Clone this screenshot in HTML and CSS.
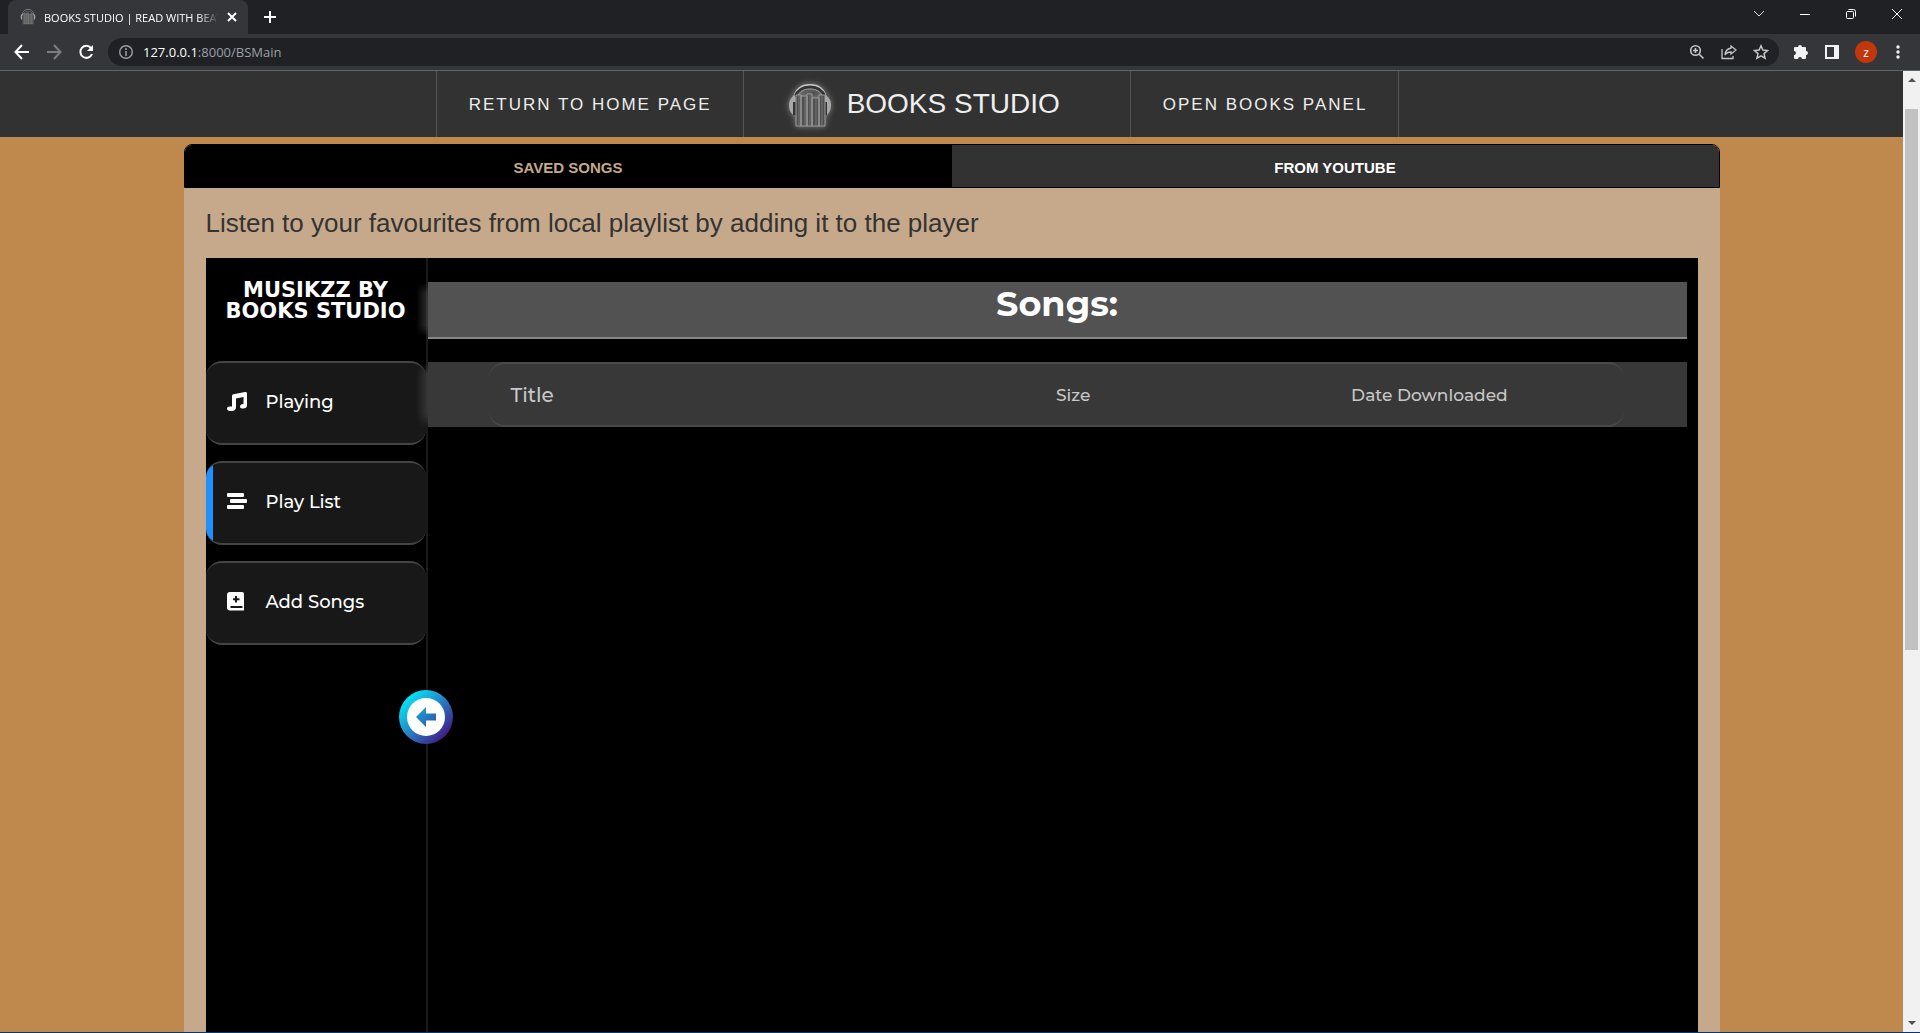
FILE: index.html
```html
<!DOCTYPE html>
<html lang="en">
<head>
<meta charset="utf-8">
<title>BOOKS STUDIO | READ WITH BEATS</title>
<link rel="stylesheet" href="styles.css">
</head>
<body>
<svg class="defs" aria-hidden="true">
  <defs>
    <linearGradient id="cool" x1="0" y1="0" x2="20" y2="20" gradientUnits="userSpaceOnUse"><stop offset="0" stop-color="#1ba9d6"/><stop offset="1" stop-color="#2f50ac"/></linearGradient>
    <symbol id="books" viewBox="0 0 44 46">
      <path d="M6 15C8 5 14 2 22 2s14 3 16 13" fill="none" stroke="#c4c4c4" stroke-width="2"/>
      <path d="M7 14C10 6 15 4 22 4s12 2 15 10" fill="none" stroke="#333" stroke-width="3"/>
      <path d="M9 14C12 8 16 6 22 6s10 2 13 8" fill="none" stroke="#999"/>
      <path d="M7 12C3 14 1 18 1 22s1 7 4 10l2-1V13zM37 12c4 2 6 6 6 10s-1 7-4 10l-2-1V13z" fill="#a8a8a8"/>
      <path d="M5 19h3v13H5zM36 19h3v13h-3z" fill="#333"/>
      <path d="M8 12h5v31H8zM13 13h6v30h-6zM19 11h5v32h-5zM24 15h7v28h-7zM31 12h6v31h-6z" fill="#505050" stroke="#9c9c9c"/>
      <path d="M11 13v29M17 14v28M22 12v30M28 16v26M34 13v29" stroke="#747474"/>
    </symbol>
  </defs>
</svg>
<div class="window">
  <header class="chrome">
    <div class="tabstrip">
      <div class="tab">
        <svg class="favicon"><use href="#books"/></svg>
        <span class="tab-title">BOOKS STUDIO | READ WITH BEATS</span>
        <button class="plain" aria-label="Close tab"><svg width="10" height="10" viewBox="0 0 10 10"><path d="M1 1l8 8M9 1L1 9" stroke="#fff" stroke-width="2"/></svg></button>
      </div>
      <button class="plain new-tab" aria-label="New tab"><svg width="12" height="12" viewBox="0 0 12 12"><path d="M6 0v12M0 6h12" stroke="#fff" stroke-width="2"/></svg></button>
      <div class="window-buttons">
        <button class="plain" aria-label="Search tabs"><svg width="12" height="12" viewBox="0 0 12 12"><path d="M1 3l5 5 5-5" fill="none" stroke="#ddd"/></svg></button>
        <button class="plain" aria-label="Minimize"><svg width="12" height="12" viewBox="0 0 12 12"><path d="M1 6.500h10" stroke="#fff"/></svg></button>
        <button class="plain" aria-label="Restore"><svg width="12" height="12" viewBox="0 0 12 12" fill="none" stroke="#fff"><rect x="1.500" y="3.500" width="7" height="7" rx="1"/><path d="M3.500 1.500h5a2 2 0 0 1 2 2v5"/></svg></button>
        <button class="plain" aria-label="Close"><svg width="12" height="12" viewBox="0 0 12 12"><path d="M1 1l10 10M11 1L1 11" stroke="#fff"/></svg></button>
      </div>
    </div>
    <div class="toolbar">
      <div class="history">
        <button class="plain" aria-label="Back"><svg width="16" height="16" viewBox="0 0 16 16" fill="none" stroke="#fff" stroke-width="2"><path d="M15 8H2M8 1L1.500 8 8 15"/></svg></button>
        <button class="plain" aria-label="Forward"><svg width="16" height="16" viewBox="0 0 16 16" fill="none" stroke="#7c7d80" stroke-width="2"><path d="M1 8h13M8 1l6.500 7L8 15"/></svg></button>
        <button class="plain" aria-label="Reload"><svg width="16" height="16" viewBox="0 0 16 16"><path d="M13 4A6 6 0 1 0 14 10" fill="none" stroke="#fff" stroke-width="2"/><path d="M15 1v6H9z" fill="#fff"/></svg></button>
      </div>
      <div class="omnibox">
        <svg width="14" height="14" viewBox="0 0 14 14" fill="none" stroke="#9aa0a6"><circle cx="7" cy="7" r="6.300" stroke-width="1.400"/><path d="M7 6v5M7 3v2" stroke-width="1.500"/></svg>
        <a class="url" href="#"><b>127.0.0.1</b>:8000/BSMain</a>
        <div class="page-actions">
          <button class="plain" aria-label="Zoom"><svg width="16" height="16" viewBox="0 0 16 16" fill="none" stroke="#c4c7c5" stroke-width="1.600"><circle cx="6.500" cy="6.500" r="4.800"/><path d="M10 10l4.500 4.500M4 6.500h5M6.500 4v5"/></svg></button>
          <button class="plain" aria-label="Share"><svg width="16" height="16" viewBox="0 0 16 16" fill="none" stroke="#c4c7c5" stroke-width="1.300"><path d="M1 5v9.500h11V12M10 2l5 4-5 4V8C7 8 5 9 4 11c0-4 2-6 6-7z"/></svg></button>
          <button class="plain" aria-label="Bookmark"><svg width="16" height="16" viewBox="0 0 16 16" fill="none" stroke="#c4c7c5" stroke-width="1.500"><path d="M8 1.800l1.900 4.300 4.600.400-3.500 3.100 1.100 4.600L8 11.800l-4.100 2.400L5 9.600 1.500 6.500l4.600-.4z"/></svg></button>
        </div>
      </div>
      <div class="extensions">
        <button class="plain" aria-label="Extensions"><svg width="16" height="16" viewBox="0 0 16 16"><path d="M1 4q0-1 1-1h3a2 2 0 0 1 4 0h3q1 0 1 1v3a2 2 0 0 1 0 4v3q0 1-1 1H9a2 2 0 0 0-4 0H2q-1 0-1-1v-3a2 2 0 0 0 0-4z" fill="#f1f3f4"/></svg></button>
        <button class="plain" aria-label="Side panel"><svg width="14" height="14" viewBox="0 0 14 14"><path d="M1 1h12v12H1z" fill="none" stroke="#f1f3f4" stroke-width="2"/><path d="M9 1h5v12H9z" fill="#f1f3f4"/></svg></button>
        <button class="plain avatar" aria-label="Profile">z</button>
        <button class="plain more" aria-label="Menu"><svg width="4" height="14" viewBox="0 0 4 14" fill="#f1f3f4"><circle cx="2" cy="2" r="1.700"/><circle cx="2" cy="7" r="1.700"/><circle cx="2" cy="12" r="1.700"/></svg></button>
      </div>
    </div>
  </header>
  <div class="viewport">
    <div class="page">
      <nav class="site-nav">
        <a class="nav-link" href="#">RETURN TO HOME PAGE</a>
        <a class="brand" href="#"><svg class="brand-logo"><use href="#books"/></svg>BOOKS STUDIO</a>
        <a class="nav-link" href="#">OPEN BOOKS PANEL</a>
      </nav>
      <main class="panel">
        <div class="sources">
          <button class="source active">SAVED SONGS</button>
          <button class="source">FROM YOUTUBE</button>
        </div>
        <div class="panel-body">
          <p class="lead">Listen to your favourites from local playlist by adding it to the player</p>
          <section class="player">
            <aside class="sidebar">
              <h2 class="sidebar-title">MUSIKZZ BY BOOKS STUDIO</h2>
              <div class="menu">
                <button class="menu-item"><svg width="20" height="20" viewBox="0 0 20 20" fill="#fff"><path d="M5 4q0-1.500 1.500-1.800L18 0q2-.300 2 1.500V13q0 3.500-4 3.500-3 0-3-2t3-2.500h.500V5L9 6.500V15q0 4-4.500 4Q0 19 0 16.700T3 14.500h2z"/></svg>Playing</button>
                <button class="menu-item current"><svg width="20" height="20" viewBox="0 0 20 20" fill="#fff"><rect x="0" y="1" width="17" height="4" rx="1"/><rect x="3" y="7" width="17" height="4" rx="1"/><rect x="0" y="13" width="17" height="4" rx="1"/></svg>Play List</button>
                <button class="menu-item"><svg width="20" height="20" viewBox="0 0 20 20"><path d="M3 0h12q2 0 2 2v16.500H3q-3 0-3-3V3q0-3 3-3z" fill="#fff"/><path d="M9 4v6.500M6 7.200h6.500M3.500 15h12" stroke="#181818" stroke-width="2"/></svg>Add Songs</button>
              </div>
              <button class="collapse" aria-label="Collapse sidebar"><svg width="20" height="20" viewBox="0 0 20 20"><path d="M0 10L10 0v6.500h10v7H10V20z" fill="url(#cool)"/></svg></button>
            </aside>
            <div class="songs">
              <h1 class="songs-title">Songs:</h1>
              <div class="song-list">
                <table class="song-table">
                  <thead><tr><th class="col-title">Title</th><th class="col-size">Size</th><th>Date Downloaded</th></tr></thead>
                </table>
              </div>
            </div>
          </section>
        </div>
      </main>
    </div>
    <div class="scrollbar" aria-hidden="true"><i class="arrow up"></i><div class="track"><div class="thumb"></div></div><i class="arrow down"></i></div>
  </div>
</div>
</body>
</html>
```
FILE: styles.css
```css
* { box-sizing: border-box; }
body { margin: 0; font-family: "Liberation Sans", Arial, sans-serif; }
button { font: inherit; color: inherit; cursor: pointer; }
a { color: inherit; text-decoration: none; }
svg { flex: none; display: block; }
.defs { position: absolute; width: 0; height: 0; }
.plain { display: flex; align-items: center; justify-content: center; padding: 0; border: 0; background: none; }

.window { display: flex; flex-direction: column; height: 100vh; overflow: hidden; border-bottom: 1px solid #06376e; }

/* browser chrome */
.chrome { flex: none; background: #35363a; color: #fff; font-family: "Open Sans", sans-serif; border-bottom: 1px solid #636466; }
.tabstrip { display: flex; align-items: stretch; height: 34px; padding-left: 8px; background: #202124; }
.tab { display: flex; align-items: center; gap: 8px; width: 240px; padding: 0 11px 0 12px; background: #35363a; border-radius: 8px 8px 0 0; font-size: 11px; }
.favicon { width: 16px; height: 16px; }
.tab-title { flex: 1; overflow: hidden; white-space: nowrap; mask-image: linear-gradient(to right, #000 88%, transparent); }
.new-tab { margin-left: 16px; }
.window-buttons { display: flex; gap: 34px; margin-left: auto; padding: 0 17px 6px; }
.toolbar { display: flex; align-items: center; height: 36px; padding: 0 20px 0 14px; }
.history { display: flex; gap: 16px; width: 94px; }
.omnibox { display: flex; flex: 1; align-items: center; gap: 10px; height: 28px; padding: 0 10px 0 11px; background: #202124; border-radius: 14px; }
.url { font-size: 13px; color: #9aa0a6; }
.url b { font-weight: 400; color: #fff; }
.page-actions { display: flex; gap: 16px; margin-left: auto; }
.extensions { display: flex; align-items: center; gap: 16px; padding-left: 14px; }
.avatar { width: 22px; height: 22px; border-radius: 50%; background: #c2360c; font-size: 12px; }
.more { padding-left: 3px; }

/* page viewport */
.viewport { display: flex; flex: 1; min-height: 0; }
.page { display: flex; flex: 1; flex-direction: column; min-width: 0; overflow: hidden; background: #bf894d; }
.scrollbar { display: flex; flex-direction: column; justify-content: space-between; align-items: center; width: 17px; padding: 7px 0; background: #f1f1f1; }
.track { flex: 1; width: 13px; padding-top: 27px; }
.thumb { height: calc(60% - 6px); background: #c1c1c1; }
.arrow { border: 4px solid transparent; }
.up { border-top: 0; border-bottom-color: #505050; }
.down { border-bottom: 0; border-top-color: #505050; }

.site-nav { display: flex; flex: none; justify-content: center; height: 66px; padding-right: 68px; background: #323232; color: #eee; }
.site-nav > a { display: flex; align-items: center; border-right: 1px solid #555; }
.site-nav > a:first-child { border-left: 1px solid #555; }
.nav-link { padding: 2px 31px 0 32px; font-size: 17px; letter-spacing: 2px; }
.brand { gap: 15px; padding: 0 70px 0 44px; font-size: 28px; }
.brand-logo { width: 44px; height: 46px; margin-top: 4px; filter: drop-shadow(0 0 3px #888); }

.panel { display: flex; flex: 1; flex-direction: column; width: calc(100% - 64px); max-width: 1536px; margin: 7px auto 0; background: #c6a98a; border-radius: 8px 8px 0 0; }
.sources { display: flex; height: 44px; border: 1px solid #000; border-radius: 8px 8px 0 0; overflow: hidden; }
.source { flex: 1; padding: 2px 0 0; border: 0; background: #323232; color: #fff; font-size: 15px; font-weight: 700; }
.source.active { background: #000; color: #c6a98a; }
.panel-body { display: flex; flex: 1; flex-direction: column; padding: 0 22px; }
.lead { margin: 0; padding: 19px 0 19px; font-size: 26px; line-height: 32px; color: #333; }

/* music player */
.player { display: flex; flex: 1; background: #000; color: #fff; font-family: Montserrat, Inter, sans-serif; }
.sidebar { position: relative; width: 222px; border-right: 2px solid #1a1a1a; }
.sidebar-title { margin: 22px 0 39px; text-align: center; font: 700 21px/21px "DejaVu Sans", sans-serif; }
.menu { display: flex; flex-direction: column; gap: 16px; }
.menu-item { display: flex; align-items: center; gap: 19px; height: 84px; padding: 0 21px 3px; border: 0 solid #444; border-width: 2px 0; border-radius: 16px; background: #181818; font-size: 18px; font-weight: 500; }
.menu-item.current { background: linear-gradient(to right, #1e90ff 7px, #181818 7px); }
.collapse { position: absolute; top: 432px; right: -27px; display: flex; align-items: center; justify-content: center; width: 54px; height: 54px; padding: 0; border: 8px solid transparent; border-radius: 50%; background: linear-gradient(#fff, #fff) padding-box, linear-gradient(135deg, #00f0fa 10%, #2580c4 50%, #45107f 90%) border-box; }
.songs { flex: 1; padding: 24px 11px 0 0; }
.songs-title, .song-list { position: relative; }
.songs-title { margin: 0 0 23px; height: 57px; border-bottom: 2px solid #888; background: #525252; font-size: 35px; line-height: 44px; text-align: center; }
.song-list { padding: 0 63px 0 61px; background: #383838; }
.songs-title::before, .song-list::before { content: ""; position: absolute; inset: 0 100% 0 auto; width: 12px; background: linear-gradient(to left, #444, transparent); opacity: .7; mask-image: linear-gradient(transparent, #000 12px, #000 80%, transparent); }
.song-table { width: 100%; height: 65px; table-layout: fixed; border-collapse: separate; border-spacing: 0; border: 0 solid #4a4a4a; border-width: 2px 0; border-radius: 16px; color: #c8c8c8; }
.song-table th { padding: 0; text-align: left; font-size: 17px; font-weight: 500; }
.song-table .col-title { width: 50%; padding-left: 22px; font-size: 20px; }
.song-table .col-size { width: 26%; }
```
